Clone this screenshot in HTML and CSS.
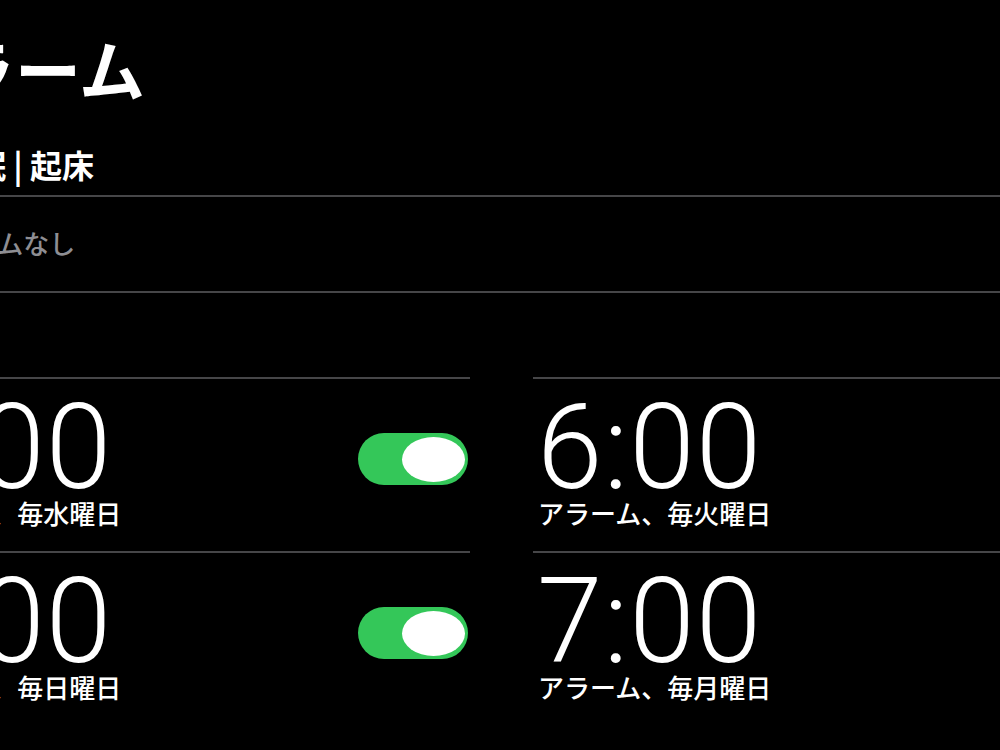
FILE: index.html
```html
<!DOCTYPE html>
<html lang="ja">
<head>
<meta charset="utf-8">
<title>アラーム</title>
<link rel="stylesheet" href="styles.css">
</head>
<body>
<div class="page">
  <h1 class="title">アラーム</h1>
  <div class="sleep-head">
    <svg class="bed" viewBox="0 0 48 30" width="48" height="30" aria-hidden="true">
      <rect x="2" y="4" width="4" height="24" rx="2" fill="#fff"/>
      <rect x="2" y="18" width="44" height="5" fill="#fff"/>
      <rect x="42" y="12" width="4" height="16" rx="2" fill="#fff"/>
      <circle cx="13" cy="13" r="4" fill="#fff"/>
      <rect x="19" y="9" width="23" height="9" rx="3" fill="#fff"/>
    </svg>
    <span class="sleep-text">睡眠 | 起床</span>
  </div>
  <div class="sleep-row">
    <span class="no-alarm">アラームなし</span>
  </div>
  <div class="alarms">
    <div class="col">
      <div class="alarm">
        <div class="info">
          <div class="time">5:00</div>
          <div class="label">アラーム、毎水曜日</div>
        </div>
        <div class="toggle"><div class="knob"></div></div>
      </div>
      <div class="alarm">
        <div class="info">
          <div class="time">8:00</div>
          <div class="label">アラーム、毎日曜日</div>
        </div>
        <div class="toggle"><div class="knob"></div></div>
      </div>
    </div>
    <div class="col">
      <div class="alarm">
        <div class="info">
          <div class="time">6:00</div>
          <div class="label">アラーム、毎火曜日</div>
        </div>
        <div class="toggle"><div class="knob"></div></div>
      </div>
      <div class="alarm">
        <div class="info">
          <div class="time">7:00</div>
          <div class="label">アラーム、毎月曜日</div>
        </div>
        <div class="toggle"><div class="knob"></div></div>
      </div>
    </div>
  </div>
</div>
</body>
</html>
```

FILE: styles.css
```css
html, body {
  margin: 0;
  padding: 0;
  background: #000;
  overflow: hidden;
}

body {
  width: 1000px;
  height: 750px;
  color: #fff;
  font-family: "Noto Sans CJK JP", "Noto Sans", sans-serif;
}

.page {
  width: 1237px;
  margin-left: -117px;
}

.title {
  margin: 0;
  padding-top: 27px;
  font-size: 66px;
  line-height: 80px;
  font-weight: 700;
}

.sleep-head {
  display: flex;
  align-items: center;
  gap: 11px;
  margin-top: 37px;
  height: 40px;
  padding-bottom: 11px;
  border-bottom: 2px solid #464648;
}

.bed {
  display: block;
  flex: none;
}

.sleep-text {
  font-size: 32px;
  line-height: 40px;
  font-weight: 700;
}

.sleep-row {
  padding: 26px 0 28px 37px;
  border-bottom: 2px solid #464648;
}

.no-alarm {
  display: block;
  font-size: 26px;
  line-height: 40px;
  font-weight: 500;
  color: #8e8e93;
}

.alarms {
  display: grid;
  grid-template-columns: 587px 587px;
  column-gap: 63px;
  margin-top: 84px;
}

.alarm {
  display: flex;
  justify-content: space-between;
  align-items: flex-start;
  border-top: 2px solid #464648;
  padding: 20px 2px 23px 4px;
}

.info {
  display: flex;
  flex-direction: column;
}

.time {
  font-family: Roboto, "Liberation Sans", sans-serif;
  font-weight: 300;
  font-size: 118px;
  line-height: 99px;
  letter-spacing: 1px;
}

.label {
  margin-left: 1px;
  font-size: 26px;
  line-height: 30px;
  font-weight: 500;
}

.toggle {
  display: flex;
  justify-content: flex-end;
  align-items: center;
  box-sizing: border-box;
  width: 110px;
  height: 52px;
  margin-top: 34px;
  padding: 0 3px;
  border-radius: 26px;
  background: #34c759;
}

.knob {
  width: 63px;
  height: 45px;
  border-radius: 50%;
  background: #fff;
}
```
